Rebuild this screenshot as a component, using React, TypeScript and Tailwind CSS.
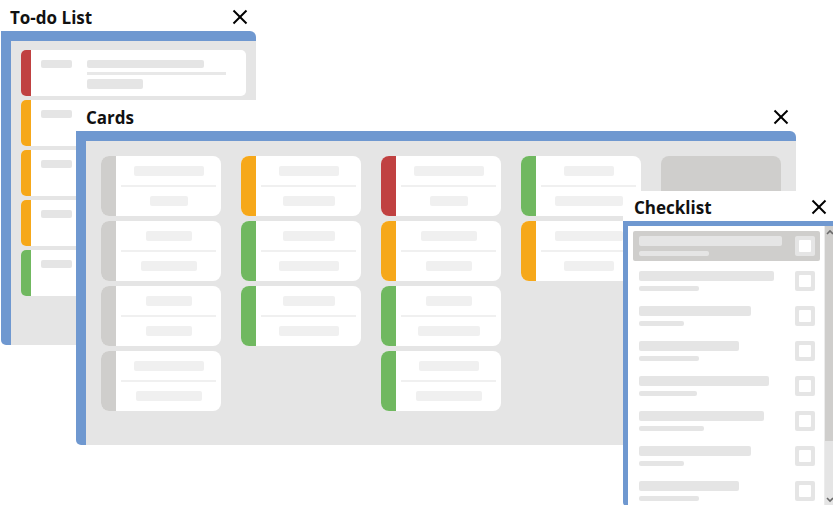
import React from "react";

const BLUE = "bg-[#6f98d0]";

function CloseX() {
  return (
    <svg width="16" height="16" viewBox="0 0 16 16" className="block">
      <line x1="1.5" y1="1.5" x2="14.5" y2="14.5" stroke="#000" strokeWidth="2" />
      <line x1="14.5" y1="1.5" x2="1.5" y2="14.5" stroke="#000" strokeWidth="2" />
    </svg>
  );
}

function Header({ title, h, pl, pr }: { title: string; h: string; pl: string; pr: string }) {
  return (
    <div className={`flex items-center justify-between bg-white ${h} ${pl} ${pr}`}>
      <span
        className="pt-[3px] text-[17px] font-bold leading-[17px] text-[#111]"
        style={{ fontFamily: '"Open Sans", "Noto Sans", sans-serif' }}
      >
        {title}
      </span>
      <span className="pt-[2px]">
        <CloseX />
      </span>
    </div>
  );
}

const todoColors = ["bg-[#c04141]", "bg-[#f6a81a]", "bg-[#f6a81a]", "bg-[#f6a81a]", "bg-[#70b860]"];

function TodoCard({ color }: { color: string }) {
  return (
    <div className="flex h-[46px] w-full overflow-hidden rounded-[5px] bg-white">
      <div className={`w-[10px] shrink-0 ${color}`} />
      <div className="flex flex-1 pl-[10px] pt-[10px]">
        <div className="h-[8px] w-[31px] rounded-[2px] bg-[#e5e5e5]" />
        <div className="ml-[15px] flex flex-col">
          <div className="h-[8px] w-[117px] rounded-[2px] bg-[#e5e5e5]" />
          <div className="mt-[4px] h-[3px] w-[139px] bg-[#e8e8e8]" />
          <div className="mt-[4px] h-[10px] w-[56px] rounded-[2px] bg-[#e5e5e5]" />
        </div>
      </div>
    </div>
  );
}

type Card = { color: string; a: number; b: number };
const G = "bg-[#cfcecc]";
const O = "bg-[#f6a81a]";
const R = "bg-[#c04141]";
const Gr = "bg-[#70b860]";

const columns: Card[][] = [
  [
    { color: G, a: 70, b: 38 },
    { color: G, a: 46, b: 56 },
    { color: G, a: 46, b: 46 },
    { color: G, a: 70, b: 66 },
  ],
  [
    { color: O, a: 60, b: 52 },
    { color: Gr, a: 52, b: 60 },
    { color: Gr, a: 52, b: 60 },
  ],
  [
    { color: R, a: 70, b: 38 },
    { color: O, a: 56, b: 46 },
    { color: Gr, a: 46, b: 62 },
    { color: Gr, a: 60, b: 66 },
  ],
  [
    { color: Gr, a: 50, b: 68 },
    { color: O, a: 68, b: 50 },
  ],
];

function KCard({ c }: { c: Card }) {
  return (
    <div className="flex h-[60px] w-[120px] overflow-hidden rounded-[8px] bg-white">
      <div className={`w-[15px] shrink-0 ${c.color}`} />
      <div className="flex flex-1 flex-col items-center px-[5px] pt-[10px]">
        <div className="h-[10px] rounded-[2px] bg-[#f0f0f0]" style={{ width: c.a }} />
        <div className="mt-[9px] h-[2px] w-full bg-[#f0f0f0]" />
        <div className="mt-[9px] h-[10px] rounded-[2px] bg-[#f0f0f0]" style={{ width: c.b }} />
      </div>
    </div>
  );
}

const checkItems = [
  [143, 70],
  [135, 60],
  [112, 45],
  [100, 60],
  [130, 58],
  [125, 65],
  [112, 45],
  [100, 60],
];

function CheckItem({ a, b, active }: { a: number; b: number; active: boolean }) {
  return (
    <div
      className={`flex h-[30px] shrink-0 items-start justify-between rounded-[2px] pl-[6px] pr-[5px] pt-[5px] ${
        active ? "bg-[#cfcecc]" : "bg-white"
      }`}
    >
      <div className="flex flex-col">
        <div className="h-[10px] rounded-[2px] bg-[#e5e5e5]" style={{ width: a }} />
        <div className="mt-[5px] h-[5px] rounded-[2px] bg-[#e5e5e5]" style={{ width: b }} />
      </div>
      <div className="flex h-[20px] w-[20px] items-center justify-center rounded-[2px] bg-[#e5e5e5]">
        <div className="h-[12px] w-[12px] rounded-[1px] bg-white" />
      </div>
    </div>
  );
}

export default function App() {
  return (
    <div className="relative h-[505px] w-[833px] overflow-hidden bg-white">
      {/* To-do List window */}
      <div className="absolute left-[1px] top-0 w-[255px]">
        <Header title="To-do List" h="h-[31px]" pl="pl-[9px]" pr="pr-[8px]" />
        <div className={`${BLUE} rounded-bl-[5px] rounded-tr-[6px] pl-[10px] pt-[10px]`}>
          <div className="flex h-[304px] flex-col gap-[4px] bg-[#e5e5e5] px-[10px] pt-[9px]">
            {todoColors.map((c, i) => (
              <TodoCard key={i} color={c} />
            ))}
          </div>
        </div>
      </div>

      {/* Cards window */}
      <div className="absolute left-[76px] top-[100px] w-[720px]">
        <Header title="Cards" h="h-[31px]" pl="pl-[10px]" pr="pr-[7px]" />
        <div className={`${BLUE} rounded-bl-[5px] rounded-tr-[6px] pl-[10px] pt-[10px]`}>
          <div className="flex h-[304px] gap-[20px] bg-[#e5e5e5] p-[15px]">
            {columns.map((col, i) => (
              <div key={i} className="flex w-[120px] flex-col gap-[5px]">
                {col.map((c, j) => (
                  <KCard key={j} c={c} />
                ))}
              </div>
            ))}
            <div className="flex w-[120px] flex-col">
              <div className="h-[60px] w-[120px] rounded-[8px] bg-[#cfcecc]" />
            </div>
          </div>
        </div>
      </div>

      {/* Checklist window */}
      <div className="absolute left-[623px] top-[191px] w-[211px]">
        <Header title="Checklist" h="h-[30px]" pl="pl-[11px]" pr="pr-[7px]" />
        <div className={`${BLUE} rounded-bl-[4px] pl-[5px] pt-[5px]`}>
          <div className="flex h-[280px] bg-white">
            <div className="flex flex-1 flex-col gap-[5px] overflow-hidden py-[5px] pl-[5px] pr-[4px]">
              {checkItems.map(([a, b], i) => (
                <CheckItem key={i} a={a} b={b} active={i === 0} />
              ))}
            </div>
            <div className="relative flex w-[10px] flex-col border-l border-[#ececec] bg-[#e5e5e5]">
              <div className="h-[215px] w-full bg-[#cfcecc]" />
              <svg
                width="8"
                height="6"
                viewBox="0 0 8 6"
                className="absolute left-[0.5px] top-[3px]"
              >
                <polyline points="1,5 4,2 7,5" fill="none" stroke="#6b6b6b" strokeWidth="1.6" />
              </svg>
              <svg
                width="8"
                height="6"
                viewBox="0 0 8 6"
                className="absolute bottom-[3px] left-[0.5px]"
              >
                <polyline points="1,1 4,4 7,1" fill="none" stroke="#6b6b6b" strokeWidth="1.6" />
              </svg>
            </div>
          </div>
        </div>
      </div>
    </div>
  );
}
